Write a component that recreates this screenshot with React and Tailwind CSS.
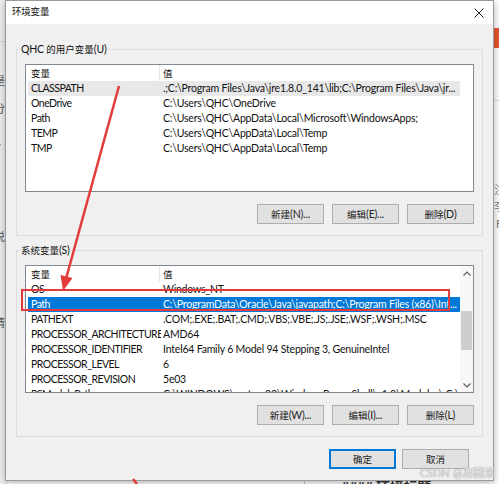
import React from 'react'

const FONT = { fontFamily: 'Lato, "Noto Sans CJK SC", sans-serif' }

const USER_VARS = [
  ['CLASSPATH', '.;C:\\Program Files\\Java\\jre1.8.0_141\\lib;C:\\Program Files\\Java\\jr...'],
  ['OneDrive', 'C:\\Users\\QHC\\OneDrive'],
  ['Path', 'C:\\Users\\QHC\\AppData\\Local\\Microsoft\\WindowsApps;'],
  ['TEMP', 'C:\\Users\\QHC\\AppData\\Local\\Temp'],
  ['TMP', 'C:\\Users\\QHC\\AppData\\Local\\Temp'],
]

const SYS_VARS = [
  ['OS', 'Windows_NT'],
  ['Path', 'C:\\ProgramData\\Oracle\\Java\\javapath;C:\\Program Files (x86)\\Int...'],
  ['PATHEXT', '.COM;.EXE;.BAT;.CMD;.VBS;.VBE;.JS;.JSE;.WSF;.WSH;.MSC'],
  ['PROCESSOR_ARCHITECTURE', 'AMD64'],
  ['PROCESSOR_IDENTIFIER', 'Intel64 Family 6 Model 94 Stepping 3, GenuineIntel'],
  ['PROCESSOR_LEVEL', '6'],
  ['PROCESSOR_REVISION', '5e03'],
  ['PSModulePath', 'C:\\WINDOWS\\system32\\WindowsPowerShell\\v1.0\\Modules\\;C:\\...'],
]

// CJK glyphs in the dialog are rendered a touch smaller than the latin text
const Zh = ({ children }) => <span className="text-[9.5px] tracking-normal">{children}</span>

function Chevron({ up }) {
  return (
    <svg width="8" height="5" viewBox="0 0 8 5" fill="none" stroke="#606060" strokeWidth="1.2">
      <path d={up ? 'M0.5 4.5L4 1L7.5 4.5' : 'M0.5 0.5L4 4L7.5 0.5'} />
    </svg>
  )
}

function Scrollbar() {
  return (
    <div className="w-[13px] bg-[#f7f7f7] flex flex-col">
      <div className="h-[14px] flex items-center justify-center"><Chevron up /></div>
      <div className="flex-1 px-[1px]">
        <div className="mt-[31px] h-[39px] bg-[#cdcdcd]" />
      </div>
      <div className="h-[14px] flex items-center justify-center"><Chevron /></div>
    </div>
  )
}

function VarList({ rows, hover = -1, selected = -1, scroll = false }) {
  return (
    <div className="h-[128px] border border-[#828790] bg-white flex overflow-hidden">
      <div className="w-[434px] shrink-0 pl-[2px] flex flex-col">
        <div className="flex h-[16px] shrink-0 items-center leading-[15px]">
          <div className="w-[132px] h-full pl-[3px] flex items-center border-r border-[#e5e5e5]"><Zh>变量</Zh></div>
          <div className="pl-[3px]"><Zh>值</Zh></div>
        </div>
        {rows.map(([k, v], i) => (
          <div
            key={k}
            className={`flex h-[15px] shrink-0 items-center leading-[15px] ${
              i === selected ? 'bg-[#0078d7] text-white' : i === hover ? 'bg-[#e8e8e8]' : ''
            }`}
          >
            <div className="w-[133px] shrink-0 pl-[3px] tracking-[-0.5px] whitespace-nowrap overflow-hidden">{k}</div>
            <div className="flex-1 pl-[2px] whitespace-nowrap overflow-hidden">{v}</div>
          </div>
        ))}
      </div>
      {scroll && <Scrollbar />}
    </div>
  )
}

function Btn({ zh, suffix, primary }) {
  return (
    <button
      className={`w-[67px] h-[20px] bg-[#e1e1e1] border text-[10.5px] leading-none text-[#222] ${
        primary ? 'border-[#0078d7] shadow-[inset_0_0_0_1px_#0078d7]' : 'border-[#adadad]'
      }`}
    >
      <Zh>{zh}</Zh>{suffix}
    </button>
  )
}

function Group({ title, buttons, children }) {
  return (
    <fieldset className="border border-[#dcdcdc] pb-[11px]">
      <legend className="ml-[3px] px-[1px] leading-[16px]">{title}</legend>
      <div className="px-[8px] pt-[6px]">
        {children}
        <div className="mt-[12px] flex justify-end gap-[8px]">
          {buttons.map(([zh, suffix]) => <Btn key={zh} zh={zh} suffix={suffix} />)}
        </div>
      </div>
    </fieldset>
  )
}

export default function App() {
  return (
    <div
      className="relative w-[499px] h-[484px] overflow-hidden bg-white text-[10.5px] tracking-[-0.2px] text-[#111]"
      style={FONT}
    >
      {/* background window behind the dialog */}
      <div className="flex h-full">
        <div className="w-[8px] bg-[#f0f0f0] flex flex-col text-[#555] text-[11px] leading-[14px] overflow-hidden">
          <div className="h-[42px] border-b border-[#d8d8d8]" />
          <div className="mt-[32px] -ml-[6px]">是</div>
          <div className="mt-[14px] -ml-[6px]">分</div>
          <div className="mt-[26px] -ml-[4px]">/</div>
          <div className="mt-[74px] -ml-[6px]">说</div>
          <div className="mt-[72px] -ml-[6px]">请</div>
        </div>
        <div className="flex-1 flex flex-col justify-end">
          <div className="h-[7px] flex overflow-hidden">
            <div className="w-[127px]" />
            <div className="w-[170px] border-r border-[#c8c8c8]" />
            <div className="pl-[36px] text-[14px] font-bold text-[#333] leading-[20px] whitespace-nowrap">#### 环境标题</div>
          </div>
        </div>
        <div className="w-[8px] flex flex-col items-end overflow-hidden">
          <div className="mt-[28px] w-[5px] h-[20px] bg-[#e8562f]" />
          <div className="mt-[52px] w-[5px] border-t border-[#e0e0e0]" />
          <div className="mt-[80px] text-[11px] leading-[17px] text-[#777] -mr-[6px]">注</div>
          <div className="text-[11px] leading-[17px] text-[#777] -mr-[6px]">李</div>
          <div className="text-[11px] leading-[17px] text-[#777] -mr-[3px]">F</div>
        </div>
      </div>

      {/* dialog window */}
      <div className="absolute left-[5px] top-0 w-[489px] border border-[#9a9a9a] bg-[#f0f0f0] shadow-[0_2px_8px_rgba(0,0,0,0.3)] flex flex-col">
        <div className="h-[23px] bg-white flex items-center justify-between pl-[6px] pr-[9px]">
          <span className="text-[9.5px]">环境变量</span>
          <svg width="10" height="10" viewBox="0 0 10 10" stroke="#222" strokeWidth="1">
            <path d="M0.5 0.5L9.5 9.5M9.5 0.5L0.5 9.5" />
          </svg>
        </div>
        <div className="px-[10px] pt-[17px] flex flex-col">
          <Group
            title={<>QHC <Zh>的用户变量</Zh>(U)</>}
            buttons={[['新建', '(N)...'], ['编辑', '(E)...'], ['删除', '(D)']]}
          >
            <VarList rows={USER_VARS} hover={0} />
          </Group>
          <div className="mt-[6px]">
            <Group
              title={<><Zh>系统变量</Zh>(S)</>}
              buttons={[['新建', '(W)...'], ['编辑', '(I)...'], ['删除', '(L)']]}
            >
              <VarList rows={SYS_VARS} selected={1} scroll />
            </Group>
          </div>
          <div className="mt-[12px] pb-[11px] pr-[14px] flex justify-end gap-[6px]">
            <Btn primary zh="确定" />
            <Btn zh="取消" />
          </div>
        </div>
      </div>

      {/* red annotation */}
      <svg className="absolute inset-0 pointer-events-none" width="499" height="484" viewBox="0 0 499 484">
        <line x1="119" y1="86" x2="66.5" y2="277" stroke="#e23b3b" strokeWidth="2.5" />
        <polygon points="63,291 60.5,275 72.5,278" fill="#e23b3b" />
        <rect x="22" y="290" width="427" height="20" fill="none" stroke="#e23b3b" strokeWidth="2" />
        <line x1="133" y1="479" x2="137" y2="484" stroke="#e23b3b" strokeWidth="2.5" />
      </svg>

      <div className="absolute right-[4px] bottom-[6px] text-[11px] leading-none tracking-normal text-[#e6e6e6] [text-shadow:0_0_1px_#777]">
        CSDN @凑圆滚
      </div>
    </div>
  )
}
